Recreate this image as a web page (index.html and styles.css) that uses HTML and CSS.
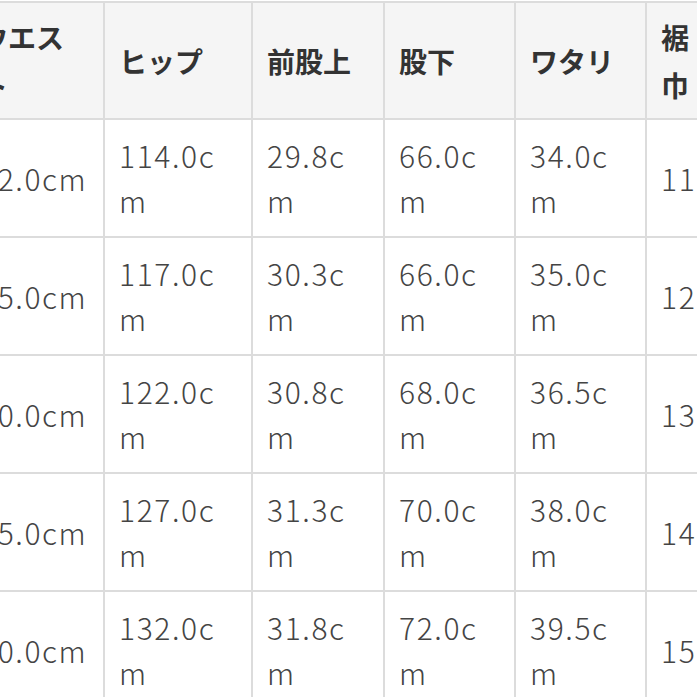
FILE: index.html
```html
<!DOCTYPE html>
<html lang="ja">
<head>
<meta charset="utf-8">
<title>サイズ表</title>
<link rel="stylesheet" href="styles.css">
</head>
<body>
<div class="frame">
  <div class="size-table">
    <div class="cell head"><div class="txt">ウエスト</div></div>
    <div class="cell head"><div class="txt">ヒップ</div></div>
    <div class="cell head"><div class="txt">前股上</div></div>
    <div class="cell head"><div class="txt">股下</div></div>
    <div class="cell head"><div class="txt">ワタリ</div></div>
    <div class="cell head last"><div class="txt">裾巾</div></div>

    <div class="cell"><div class="txt">72.0cm</div></div>
    <div class="cell"><div class="txt">114.0cm</div></div>
    <div class="cell"><div class="txt">29.8cm</div></div>
    <div class="cell"><div class="txt">66.0cm</div></div>
    <div class="cell"><div class="txt">34.0cm</div></div>
    <div class="cell last"><div class="txt">11.0cm</div></div>

    <div class="cell"><div class="txt">75.0cm</div></div>
    <div class="cell"><div class="txt">117.0cm</div></div>
    <div class="cell"><div class="txt">30.3cm</div></div>
    <div class="cell"><div class="txt">66.0cm</div></div>
    <div class="cell"><div class="txt">35.0cm</div></div>
    <div class="cell last"><div class="txt">12.0cm</div></div>

    <div class="cell"><div class="txt">80.0cm</div></div>
    <div class="cell"><div class="txt">122.0cm</div></div>
    <div class="cell"><div class="txt">30.8cm</div></div>
    <div class="cell"><div class="txt">68.0cm</div></div>
    <div class="cell"><div class="txt">36.5cm</div></div>
    <div class="cell last"><div class="txt">13.0cm</div></div>

    <div class="cell"><div class="txt">85.0cm</div></div>
    <div class="cell"><div class="txt">127.0cm</div></div>
    <div class="cell"><div class="txt">31.3cm</div></div>
    <div class="cell"><div class="txt">70.0cm</div></div>
    <div class="cell"><div class="txt">38.0cm</div></div>
    <div class="cell last"><div class="txt">14.0cm</div></div>

    <div class="cell"><div class="txt">90.0cm</div></div>
    <div class="cell"><div class="txt">132.0cm</div></div>
    <div class="cell"><div class="txt">31.8cm</div></div>
    <div class="cell"><div class="txt">72.0cm</div></div>
    <div class="cell"><div class="txt">39.5cm</div></div>
    <div class="cell last"><div class="txt">15.0cm</div></div>
  </div>
</div>
</body>
</html>
```

FILE: styles.css
```css
html, body {
  margin: 0;
  padding: 0;
  overflow: hidden;
  background: #ffffff;
}

.frame {
  width: 697px;
  height: 697px;
  overflow: hidden;
  padding-top: 1px;
  box-sizing: border-box;
}

.size-table {
  display: grid;
  grid-template-columns: 139px 148px 132px 131px 131px 72px;
  grid-template-rows: 117px;
  grid-auto-rows: 118px;
  width: max-content;
  margin-left: -36px;
  border-top: 2px solid #dcdcdc;
  border-left: 2px solid #dcdcdc;
  font-family: "Noto Sans CJK JP", "Noto Sans", sans-serif;
  color: #444444;
}

.cell {
  display: flex;
  align-items: center;
  box-sizing: border-box;
  padding: 0 14px;
  border-right: 2px solid #dcdcdc;
  border-bottom: 2px solid #dcdcdc;
  background: #ffffff;
  font-size: 30px;
  line-height: 45px;
  letter-spacing: 1.6px;
  font-weight: 300;
}

.txt {
  width: 100%;
  min-width: 0;
  word-break: break-all;
}

.head {
  background: #f5f5f5;
  font-size: 28px;
  line-height: 48px;
  font-weight: 700;
  letter-spacing: 0;
  color: #333333;
}

.last .txt {
  white-space: nowrap;
}

.head.last .txt {
  white-space: normal;
}
```
